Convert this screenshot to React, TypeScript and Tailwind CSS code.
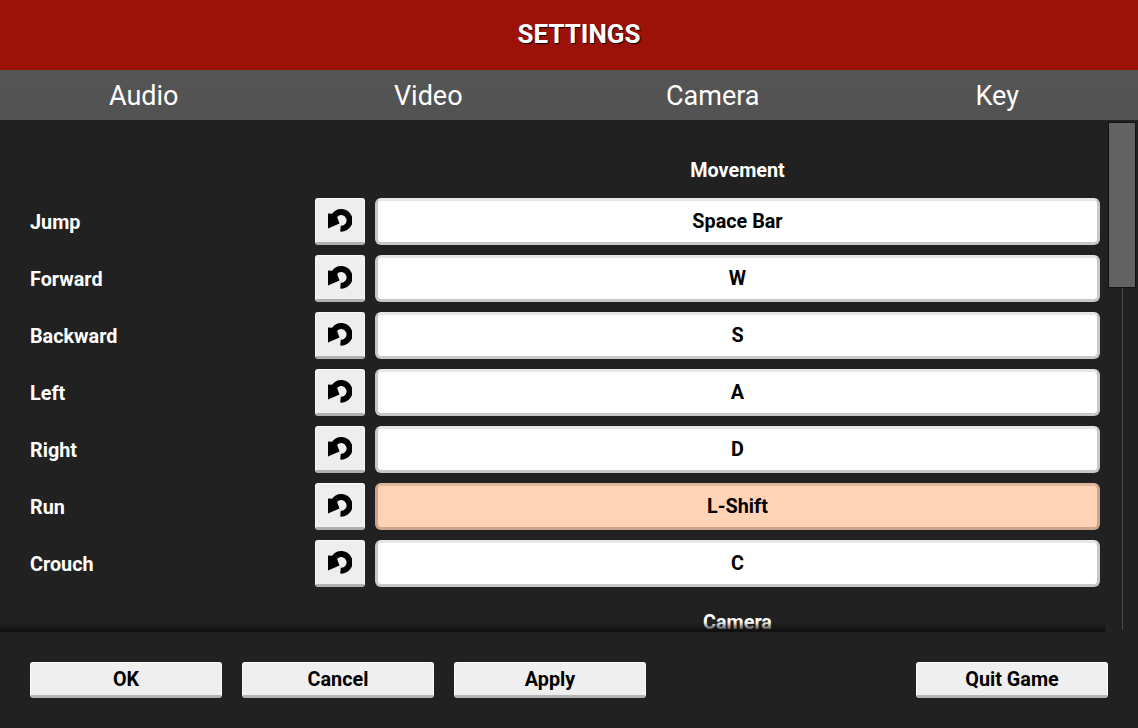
const tabs = ['Audio', 'Video', 'Camera', 'Key'];

const bindings = [
  { action: 'Jump', key: 'Space Bar' },
  { action: 'Forward', key: 'W' },
  { action: 'Backward', key: 'S' },
  { action: 'Left', key: 'A' },
  { action: 'Right', key: 'D' },
  { action: 'Run', key: 'L-Shift', active: true },
  { action: 'Crouch', key: 'C' },
];

const RevertIcon = () => (
  <svg width="24" height="23" viewBox="0 0 24 23" fill="none">
    <path d="M6.5 6.5 A8.3 8.3 0 1 1 12.5 19.6" stroke="#000" strokeWidth="6" />
    <path d="M0 4.5 L0 19.5 L11.5 14.5 L8 5 Z" fill="#000" />
  </svg>
);

const FooterButton = ({ label }: { label: string }) => (
  <button className="w-[192px] h-[36px] pt-[2px] bg-[#efefef] rounded-[3px] border border-[#fafafa] border-b-[3px] border-b-[#b4b4b4] text-black text-[19.8px] font-bold leading-none">
    {label}
  </button>
);

const KeyRow = ({ action, keyName, active }: { action: string; keyName: string; active?: boolean }) => (
  <div className="flex items-center h-[47px] mb-[10px]">
    <div className="w-[285px] pt-[2px] text-white text-[19.8px] font-bold">{action}</div>
    <button className="w-[50px] h-[47px] flex items-center justify-center bg-[#eeeeee] rounded-[3px] border border-[#f8f8f8] border-b-[3px] border-b-[#b0b0b0]">
      <RevertIcon />
    </button>
    <div
      className={`ml-[10px] w-[725px] h-[47px] flex items-center justify-center rounded-[6px] border-[3px] text-black text-[19.8px] font-bold ${
        active ? 'bg-[#ffd3b5] border-[#c9a68d] border-t-[#dfb89c]' : 'bg-white border-[#c8c8c8] border-t-[#e6e6e6]'
      }`}
    >
      {keyName}
    </div>
  </div>
);

export default function App() {
  return (
    <div className="w-[1138px] h-[728px] flex flex-col bg-[#212121] overflow-hidden font-['Roboto',sans-serif]">
      <div className="h-[70px] shrink-0 pl-[20px] pb-[2px] flex items-center justify-center bg-[#9c1208] text-white text-[26px] font-bold [text-shadow:1px_1px_1px_#000]">
        SETTINGS
      </div>

      <div className="h-[50px] shrink-0 grid grid-cols-[repeat(4,284.5px)] pl-[1.5px] pt-[2px] bg-gradient-to-b from-[#555555] to-[#525252]">
        {tabs.map((tab) => (
          <div key={tab} className="flex items-center justify-center text-white text-[27px]">
            {tab}
          </div>
        ))}
      </div>

      <div className="relative flex-1 overflow-hidden pl-[30px]">
        <div className="ml-[345px] w-[725px] h-[78px] pt-[37px] text-center text-white text-[19.8px] font-bold leading-[28px]">
          Movement
        </div>
        {bindings.map((b) => (
          <KeyRow key={b.action} action={b.action} keyName={b.key} active={b.active} />
        ))}
        <div className="ml-[345px] w-[725px] pt-[12px] text-center text-white text-[19.8px] font-bold leading-[28px]">
          Camera
        </div>

        <div className="absolute right-[2px] top-[2px] bottom-0 w-[28px]">
          <div className="absolute left-[14px] top-0 bottom-0 w-px bg-[#4a4a4a]" />
          <div className="relative h-[166px] bg-[#626262] border border-[#111111]" />
        </div>
      </div>

      <div className="relative h-[98px] shrink-0 flex items-start gap-[20px] pt-[32px] pl-[30px] pr-[30px]">
        <div className="absolute left-0 top-[-8px] w-[1105px] h-[10px] bg-gradient-to-b from-transparent to-[#0f0f0f]" />
        <FooterButton label="OK" />
        <FooterButton label="Cancel" />
        <FooterButton label="Apply" />
        <div className="flex-1" />
        <FooterButton label="Quit Game" />
      </div>
    </div>
  );
}
